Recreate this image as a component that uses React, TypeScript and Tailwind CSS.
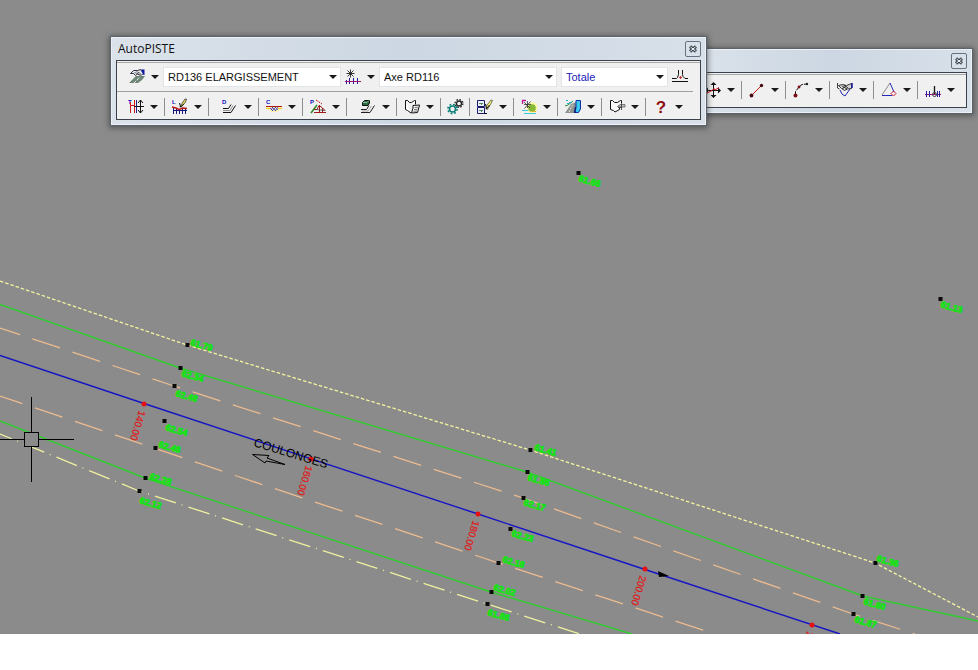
import { useState } from 'react'
import type { ReactNode } from 'react'

const PROJECT_OPTIONS = ['RD136 ELARGISSEMENT', 'RD116 EXISTANT']
const AXIS_OPTIONS = ['Axe RD116', 'Axe RD136']
const VIEW_OPTIONS = ['Totale', 'Partielle']

// Kilometre points along the axis
const STATIONS = [
  { x: 144, y: 404, label: '140.00' },
  { x: 311, y: 459, label: '160.00' },
  { x: 478, y: 514, label: '180.00' },
  { x: 645, y: 569, label: '200.00' },
  { x: 812, y: 625, label: '220.00' },
]

// Surveyed points: marker position, label position, elevation
const SURVEY_POINTS = [
  { x: 578, y: 173, tx: 578, ty: 181, z: '61.66' },
  { x: 940, y: 299, tx: 940, ty: 307, z: '61.13' },
  { x: 187, y: 345, tx: 190, ty: 345, z: '61.79' },
  { x: 180, y: 368, tx: 181, ty: 376, z: '62.34' },
  { x: 174, y: 386, tx: 175, ty: 396, z: '62.48' },
  { x: 164, y: 421, tx: 165, ty: 430, z: '62.54' },
  { x: 155, y: 448, tx: 158, ty: 447, z: '62.48' },
  { x: 145, y: 478, tx: 149, ty: 479, z: '62.28' },
  { x: 139, y: 491, tx: 139, ty: 503, z: '62.12' },
  { x: 530, y: 450, tx: 534, ty: 450, z: '61.41' },
  { x: 527, y: 472, tx: 527, ty: 480, z: '61.86' },
  { x: 523, y: 498, tx: 523, ty: 505, z: '62.17' },
  { x: 510, y: 529, tx: 511, ty: 536, z: '62.23' },
  { x: 498, y: 563, tx: 502, ty: 562, z: '62.18' },
  { x: 491, y: 592, tx: 493, ty: 590, z: '62.02' },
  { x: 487, y: 604, tx: 487, ty: 615, z: '61.86' },
  { x: 875, y: 563, tx: 876, ty: 561, z: '61.36' },
  { x: 862, y: 596, tx: 863, ty: 604, z: '61.60' },
  { x: 853, y: 614, tx: 854, ty: 622, z: '61.87' },
]

function Icon({ children }: { children: ReactNode }) {
  return (
    <svg viewBox="0 0 16 16" className="h-4 w-4 overflow-visible" fill="none" strokeWidth="1" aria-hidden="true">
      {children}
    </svg>
  )
}

function IconLetter({ children }: { children: string }) {
  return (
    <text x="0" y="5" fontSize="6" fontWeight="700" fill="#1010c0" fontFamily="Liberation Sans, sans-serif">
      {children}
    </text>
  )
}

const icons = {
  project: (
    <Icon>
      <path d="M0 14 7 7h9l-3 4-4 3z" fill="#6f8577" />
      <path d="M5 14 11 8" stroke="#e8efe8" strokeDasharray="3 1" />
      <path d="m1.500 4.500 3-3h4l3-1 3 4-2 1.500h-2l-2-1-2 1.500-2-2z" fill="#e4e8ee" stroke="#1a1a2a" strokeWidth=".9" />
      <path d="m5.500 3.500 5 2M7.500 2.500l4 2" stroke="#333" strokeWidth=".7" />
      <path d="M12 .5h3.500V6h-1z" fill="#0a1aa0" />
    </Icon>
  ),
  axis: (
    <Icon>
      <path d="M5.500.5v8M1.500 4.500h8M2.500 1.500l6 6M8.500 1.500l-6 6" stroke="#222" strokeWidth=".9" />
      <path d="M1.500 11v4M4.500 9v6M8.500 9v6M12.500 9v6" stroke="#1c1c9c" />
      <path d="M0 12.500h16" stroke="#a01070" />
    </Icon>
  ),
  transversal: (
    <Icon>
      <IconLetter>T</IconLetter>
      <path d="M2.500 3v11M6.500 1v13M2 6.500h4" stroke="#d01818" />
      <path d="M8.500 1v13" stroke="#22228a" />
      <path d="M6 7.500h10M12.500 1v13M10 4l2.500-3L15 4M10 11l2.500 3 2.500-3" stroke="#111" />
    </Icon>
  ),
  longProfile: (
    <Icon>
      <IconLetter>L</IconLetter>
      <path d="M1 11.500h14M1.500 9v6M4.500 10v5M7.500 11v4M10.500 10v5M13.500 9v6" stroke="#16167c" />
      <path d="m0 8 4 1 3 1.500L11 9l4 .5" stroke="#c01818" strokeWidth="1.500" />
      <path d="m8 8 1-2 4-6h1.500l-1 3-4 5z" fill="#f4e65a" stroke="#333" strokeWidth=".8" />
      <path d="m7.500 4 1 4 3-3" stroke="#111" />
    </Icon>
  ),
  layers: (
    <Icon>
      <IconLetter>D</IconLetter>
      <path d="M1 9.500h5.500L9 5.500M1 13.500h8l4.500-7" stroke="#111" />
      <path d="M1 11.500h7l3-5" stroke="#777" strokeWidth=".8" />
    </Icon>
  ),
  cubature: (
    <Icon>
      <IconLetter>C</IconLetter>
      <path d="M0 8h16v2.500h-2L12 13H5l-2-2.500H0z" fill="#f8f0b0" />
      <path d="M0 9.500h4M12 9.500h4" stroke="#f0d020" />
      <path d="M0 7.500h16" stroke="#b01818" />
      <path d="m4 9 3 3M6 8l4 4M9 8l3 3M7 8l-2 3M10 8l-4 4M12 8l-3 4" stroke="#2424c0" strokeWidth=".7" />
    </Icon>
  ),
  plan: (
    <Icon>
      <IconLetter>P</IconLetter>
      <path d="M1 14 7 6" stroke="#2c8a2c" strokeWidth="1.500" />
      <path d="m6 1 6 4" stroke="#c01818" strokeDasharray="2 1" />
      <path d="M4 10.500h3l2-4 3 2 3 3M4 13.500h12M9.500 6v8M12.500 9v5" stroke="#a01818" />
      <path d="m6 10.500 9 1" stroke="#444" strokeWidth=".8" />
    </Icon>
  ),
  structure: (
    <Icon>
      <path d="m2.500 3.500 2-2h5V4L8 6.500H2.500z" fill="#2c6a40" stroke="#111" />
      <path d="M3 3.500h4l2-2" stroke="#a4d0b0" strokeWidth=".8" />
      <path d="M1 10.500h5.500L9 6.500M1 13.500h9l4.500-7" stroke="#222" />
      <path d="M2 12h6l3.500-5" stroke="#888" strokeWidth=".7" />
    </Icon>
  ),
  bookList: (
    <Icon>
      <path d="M1.500 1.500v9l2 1L7 14M1.500 1.500h2l2 2h2l3-2h1v4" fill="#fff" stroke="#111" />
      <path d="m9 6.500 6.500-.5-.5 2-1.500 5.500-6 .5L9 9z" fill="#fff" stroke="#111" />
      <path d="m10.500 8.500 3.500-.3M10 10.500l3.500-.3M9.500 12.300l3.500-.3" stroke="#333" strokeWidth=".7" />
    </Icon>
  ),
  gears: (
    <Icon>
      <circle cx="12" cy="4.500" r="2.500" stroke="#222" strokeWidth="1.300" />
      <circle cx="12" cy="4.500" r="3.900" stroke="#222" strokeWidth="1.300" strokeDasharray="1.530 1.530" />
      <circle cx="5.500" cy="10" r="3" stroke="#0d8078" strokeWidth="1.600" />
      <circle cx="5.500" cy="10" r="4.600" stroke="#0d8078" strokeWidth="1.600" strokeDasharray="1.800 1.810" />
    </Icon>
  ),
  sheets: (
    <Icon>
      <path d="M.5 1.500h7v6h-7zM.5 8.500h7v6h-7z" fill="#eef" stroke="#1a1a6c" />
      <path d="M2 4.500h4M4.500 4v2M2 11.500h4M4.500 11v2" stroke="#2c7a3c" strokeWidth=".8" />
      <path d="m9 10 1-4 4-5 1.500.5-2 4-3 5z" fill="#f6ec70" stroke="#444" strokeWidth=".7" />
      <path d="m8.500 5 1 5 3-4M7 14.500h3" stroke="#111" />
    </Icon>
  ),
  topo: (
    <Icon>
      <circle cx="11" cy="8.500" r="5.500" fill="#f8f7a8" />
      <circle cx="11" cy="9" r="3.800" fill="#86b83a" />
      <path d="M1 1.500h4M1.500 1v4" stroke="#c01890" strokeWidth="1.300" />
      <path d="m3 3 6 6M9.500 2.500l-6 7M6.500 2v7M3 5.500h7" stroke="#333" strokeWidth=".8" />
      <path d="M1 11.500h6M3 14.500h12" stroke="#38c8d8" />
      <path d="M10 12.500h5" stroke="#e0b030" />
    </Icon>
  ),
  drainage: (
    <Icon>
      <path d="M0 14 6 5l5-2v11H0z" fill="#8e9393" />
      <path d="m4 13 4-8" stroke="#e8e8d0" strokeDasharray="2 1" />
      <path d="m0 7 3-1 5-4" stroke="#2c8a3c" />
      <path d="M1 1.500h2M4 3.500h3M2 4.500h2" stroke="#28a8d0" />
      <path d="M11 1.500h4.500V10l-2 3.500H10l1-5z" fill="#38c8f0" stroke="#1030a0" />
      <path d="m9.500 14 1-6" stroke="#0a1a70" strokeWidth="1.300" />
    </Icon>
  ),
  bookExport: (
    <Icon>
      <path d="M12.500 4V1.500h-1l-3 2h-3l-2-2h-2v9l3 1 1.500 1.500 4.500-2.500V9" fill="#fafafa" stroke="#111" />
      <path d="M8.500 7.500 11 5.500h5v2.500h-5z" fill="#bbb" stroke="#666" strokeWidth=".8" />
      <path d="M12.500 4v7M9 8.500h4" stroke="#333" strokeWidth=".8" />
    </Icon>
  ),
  help: (
    <Icon>
      <text x="8" y="14" textAnchor="middle" fontSize="17" fontWeight="700" fill="#8c1010" fontFamily="Liberation Sans, sans-serif">
        ?
      </text>
    </Icon>
  ),
  crossSection: (
    <Icon>
      <path d="M0 9.500h4.500l1-1 1-3V1M16 9.500h-3l-2-2-.5-2V1M0 12.500h16" stroke="#111" />
      <path d="m8.500 7 1.500 1.500L8.500 10 7 8.500z" fill="#c01818" />
    </Icon>
  ),
  move: (
    <Icon>
      <path d="M8.500 1v14M1 8.500h14" stroke="#111" />
      <path d="m8.500 0 3 3h-6zM8.500 16l3-3h-6zM0 8.500l3-3v6zM16 8.500l-3-3v6z" fill="#111" />
      <path d="m2 11 5-2.500 2-2 1 1.500 4-2.500" stroke="#d01818" />
    </Icon>
  ),
  line: (
    <Icon>
      <path d="m3 13 9-9" stroke="#c01818" />
      <circle cx="2.500" cy="13.500" r="1.900" fill="#4a0c10" />
      <circle cx="12.500" cy="3.500" r="1.700" fill="#4a0c10" />
    </Icon>
  ),
  arc: (
    <Icon>
      <path d="M2.500 13V9.500L6 5l3-2.500 5-.5" stroke="#111" strokeDasharray="4 1" />
      <circle cx="2.500" cy="13.500" r="2" fill="#7c1018" />
      <circle cx="6" cy="5" r="1.400" fill="#7c1018" />
      <circle cx="14" cy="2" r="1.200" fill="#222" />
    </Icon>
  ),
  clothoid: (
    <Icon>
      <path d="m3 8 2 4 3 2 5-7" stroke="#2020b0" />
      <path d="m1.500 3.500 4-1 4 1 5-2v5l-4 .5-3 1.500-3-2z" fill="#d4d4d4" stroke="#222" strokeWidth=".9" />
      <path d="M.5 1v5l2 1M5 4l5 3M7 3l4 3M9 4 5 7" stroke="#111" strokeWidth=".8" />
      <path d="M15 1v5" stroke="#1818a0" strokeWidth="1.500" />
    </Icon>
  ),
  triangle: (
    <Icon>
      <path d="m9 1-8 12" stroke="#888" />
      <path d="M1 13.500h10M9 1l4 9" stroke="#2828b8" />
      <path d="m12.500 9 2.500 2.500-2.500 2.500-2.500-2.500z" stroke="#c81830" />
    </Icon>
  ),
  offset: (
    <Icon>
      <path d="M0 12.500h16" stroke="#a01880" />
      <path d="M1.500 9v6M4.500 9v6M14.500 9v6M12.500 9v6" stroke="#2020a0" />
      <path d="M9.500 4v8" stroke="#111" strokeWidth="1.300" />
      <circle cx="9.500" cy="12.500" r="2" stroke="#444" />
    </Icon>
  ),
}

const MAIN_TOOLS = [
  { label: 'Transversal', icon: icons.transversal },
  { label: 'Profil en long', icon: icons.longProfile },
  { label: 'Dévers', icon: icons.layers, wide: true },
  { label: 'Cubatures', icon: icons.cubature },
  { label: 'Profils en travers', icon: icons.plan },
  { label: 'Structures', icon: icons.structure, wide: true },
  { label: 'Listings', icon: icons.bookList },
  { label: 'Configuration', icon: icons.gears, single: true },
  { label: 'Dessins', icon: icons.sheets },
  { label: 'Topographie', icon: icons.topo },
  { label: 'Assainissement', icon: icons.drainage },
  { label: 'Exports', icon: icons.bookExport },
  { label: 'Aide', icon: icons.help },
]

const AXIS_TOOLS = [
  { label: 'Déplacer', icon: icons.move },
  { label: 'Droite', icon: icons.line },
  { label: 'Arc', icon: icons.arc },
  { label: 'Clothoïde', icon: icons.clothoid },
  { label: 'Sommet', icon: icons.triangle },
  { label: 'Décalage', icon: icons.offset },
]

function Caret() {
  return (
    <svg viewBox="0 0 8 4" className="h-1 w-2" fill="#1a1a1a" aria-hidden="true">
      <path d="M0 0h8L4 4z" />
    </svg>
  )
}

function ToolButton({ label, icon, single = false }: { label: string; icon: ReactNode; single?: boolean }) {
  return (
    <div className="flex items-center gap-1.5">
      <button type="button" aria-label={label} className="hover:bg-[#dbe6f3]">
        {icon}
      </button>
      {!single && (
        <button type="button" aria-label={`${label} : options`} className="py-1.5">
          <Caret />
        </button>
      )}
    </div>
  )
}

function ToolRow({ tools }: { tools: { label: string; icon: ReactNode; wide?: boolean; single?: boolean }[] }) {
  return (
    <>
      {tools.map(tool => (
        <div
          key={tool.label}
          className={`flex h-[18px] items-center border-r border-[#8e8e8e] pr-1.5 last:border-r-0 ${
            tool.wide ? 'pl-[13px]' : tool.single ? 'pl-1.5' : 'pl-[7px]'
          }`}
        >
          <ToolButton label={tool.label} icon={tool.icon} single={tool.single} />
        </div>
      ))}
    </>
  )
}

function Dropdown({ label, options, className }: { label: string; options: string[]; className: string }) {
  const [value, setValue] = useState(options[0])
  return (
    <div className={`relative flex h-5 items-center border border-[#e2e4e8] bg-white ${className}`}>
      <select
        aria-label={label}
        value={value}
        onChange={e => setValue(e.target.value)}
        className="h-full w-full appearance-none bg-transparent pr-4 pl-1 text-[11px] outline-none"
      >
        {options.map(opt => (
          <option key={opt} value={opt}>{opt}</option>
        ))}
      </select>
      <span className="pointer-events-none absolute right-[3px]">
        <Caret />
      </span>
    </div>
  )
}

function FloatingWindow({ title, className, children }: { title?: string; className: string; children: ReactNode }) {
  return (
    <section
      className={`absolute border border-[#eef2f6] bg-linear-to-r from-[#dbe2ea] via-[#ccd7e3] to-[#d8e0e9] px-1 pb-1 shadow-[0_0_1px_1px_#5c636b,0_1px_6px_2px_rgba(0,0,0,0.4)] ${className}`}
    >
      <header className="flex h-[22px] items-center justify-between">
        <h2 className="pl-0.5 font-['Open_Sans',sans-serif] text-xs text-[#111]">{title}</h2>
        <button
          type="button"
          aria-label="Fermer"
          className="flex h-4 w-4 items-center justify-center rounded-xs border border-[#65727f] bg-[#d9e1ea]"
        >
          <svg viewBox="0 0 8 8" className="h-2 w-2" aria-hidden="true">
            <path d="m1 1.500 6 5m0-5-6 5" stroke="#3c4650" strokeWidth="3.200" />
            <path d="m1.500 2 5 4m0-4-5 4" stroke="#fff" strokeWidth="1" />
          </svg>
        </button>
      </header>
      <div className="border border-[#3a414a] bg-[#f0f0f0] pt-px">
        <div className="border-t border-[#a8a8a8]">{children}</div>
      </div>
    </section>
  )
}

function RoadPlan() {
  return (
    <svg className="absolute inset-0 h-full w-full" fill="none" aria-label="Vue en plan">
      {/* Terrain limits */}
      <path d="M0 281 187 345 530 450 875 563 978 617" stroke="#f4f4a0" strokeWidth="1.300" strokeDasharray="3.500 2" />
      <path d="M0 434 139 491 487 604 580 634" stroke="#f0f0a0" strokeWidth="1.300" strokeDasharray="22 6 1 6.300" strokeDashoffset="9.500" />

      {/* Road edges */}
      <path d="M0 304.500 180 368 527 472 863 596 978 621" stroke="#30cc30" strokeWidth="1.400" />
      <path d="M0 421 145 478 491 592 632 634" stroke="#30cc30" strokeWidth="1.400" />

      {/* Lane markings */}
      <path d="M0 328 174 386 523 498 853 614 915 634" stroke="#ecbb90" strokeWidth="1.300" strokeDasharray="29 13.200" strokeDashoffset="8" />
      <path d="M0 396 235 475.500 476 555.500 704 630.500 715 634" stroke="#ecbb90" strokeWidth="1.300" strokeDasharray="29 13.200" strokeDashoffset="5.300" />

      {/* Axis */}
      <path d="M0 355.500 144 403.500 478 514 645 569.500 840 634" stroke="#1616c4" strokeWidth="1.400" />
      <path d="m658 571 11 5-10 1z" fill="#000" />

      {SURVEY_POINTS.map(p => (
        <g key={`${p.x}-${p.y}`}>
          <rect x={p.x - 1.5} y={p.y - 2} width="4" height="4" fill="#0a0a0a" />
          <text
            transform={`translate(${p.tx} ${p.ty}) rotate(16)`}
            fill="#12e412"
            stroke="#12e412"
            strokeWidth=".7"
            className="font-['Liberation_Sans',sans-serif] text-[9px] font-bold"
          >
            {p.z}
          </text>
        </g>
      ))}

      {STATIONS.map(s => (
        <g key={s.label}>
          <circle cx={s.x} cy={s.y} r="2.500" fill="#e81010" />
          <text
            transform={`translate(${s.x - 5} ${s.y + 6}) rotate(107)`}
            fill="#e01818"
            stroke="#e01818"
            strokeWidth=".2"
            className="font-['Liberation_Sans',sans-serif] text-[10px]"
          >
            {s.label}
          </text>
        </g>
      ))}

      <text
        transform="translate(253 446) rotate(17)"
        fill="#000"
        className="font-['Liberation_Sans',sans-serif] text-xs"
      >
        COULONGES
      </text>
      <path d="m252.500 454.500 16.500 1-2 2.500 18 6.500-19-3.500-1 2z" stroke="#000" />

      {/* Cursor */}
      <path d="M0 439.500h24M39 439.500h35M31.500 397v35M31.500 447v35" stroke="#000" />
      <rect x="24.500" y="432.500" width="14" height="14" fill="#8b8b8b" stroke="#000" />
    </svg>
  )
}

export default function App() {
  return (
    <div className="flex min-h-screen flex-col bg-white font-['Liberation_Sans',sans-serif] text-[11px] text-[#111]">
      <main className="relative flex-1 overflow-hidden bg-[#8b8b8b]">
        <RoadPlan />

        <FloatingWindow className="top-[49px] left-[691px] w-[281px]">
          <div className="flex h-8 items-center pb-0.5 pl-px">
            <ToolRow tools={AXIS_TOOLS} />
          </div>
        </FloatingWindow>

        <FloatingWindow title="AutoPISTE" className="top-[37px] left-[111px] w-[595px]">
          <div className="mr-[7px] flex h-[29px] items-center gap-1 border-b border-[#a0a0a0] pl-3">
            <ToolButton label="Projet" icon={icons.project} />
            <Dropdown label="Projet courant" options={PROJECT_OPTIONS} className="w-[178px]" />
            <ToolButton label="Axe" icon={icons.axis} />
            <Dropdown label="Axe courant" options={AXIS_OPTIONS} className="w-[178px]" />
            <Dropdown label="Vue" options={VIEW_OPTIONS} className="w-[107px] text-[#2020b8]" />
            <ToolButton label="Profil type" icon={icons.crossSection} single />
          </div>
          <div className="flex h-[27px] items-center pt-[3px] pl-1">
            <ToolRow tools={MAIN_TOOLS} />
          </div>
        </FloatingWindow>
      </main>
      <footer className="h-9 bg-white" />
    </div>
  )
}
